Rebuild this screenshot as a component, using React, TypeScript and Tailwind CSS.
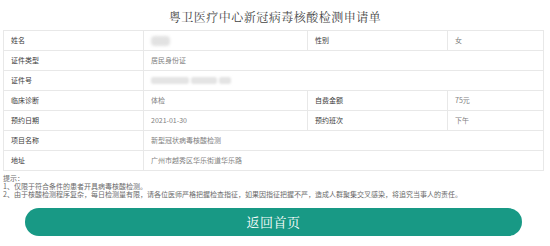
import React from 'react';

const font = { fontFamily: '"Noto Sans CJK SC", "Noto Sans", sans-serif' };

type Cell = { label: string; value: React.ReactNode };

const Label = ({ children }: { children: React.ReactNode }) => (
  <div className="h-[19px] flex items-center pl-[7px] border-r border-[#e8e8e8] text-[#3a3a3a]">{children}</div>
);

const Value = ({ children, wide }: { children: React.ReactNode; wide?: boolean }) => (
  <div className={`h-[19px] flex items-center pl-[7px] text-[#808080] ${wide ? 'col-span-3' : ''}`}>{children}</div>
);

const Blur = ({ w }: { w: string }) => (
  <div className={`${w} h-[7px] bg-[#e4e4e4] rounded-[2px] blur-[1.2px]`} />
);

const pairs: Cell[][] = [
  [
    { label: '姓名', value: <div className="w-[19px] h-[10px] bg-[#e2e2e2] blur-[1.5px] rounded-sm" /> },
    { label: '性别', value: '女' },
  ],
  [{ label: '证件类型', value: '居民身份证' }],
  [
    {
      label: '证件号',
      value: (
        <div className="flex gap-[2px] items-center">
          <Blur w="w-[38px]" />
          <Blur w="w-[26px]" />
          <Blur w="w-[12px]" />
        </div>
      ),
    },
  ],
  [
    { label: '临床诊断', value: '体检' },
    { label: '自费金额', value: '75元' },
  ],
  [
    { label: '预约日期', value: '2021-01-30' },
    { label: '预约班次', value: '下午' },
  ],
  [{ label: '项目名称', value: '新型冠状病毒核酸检测' }],
  [{ label: '地址', value: '广州市越秀区华乐街道华乐路' }],
];

export default function App() {
  return (
    <div className="w-[550px] h-[246px] bg-white overflow-hidden" style={font}>
      <h1
        className="h-[30px] flex items-center justify-center text-[12px] tracking-[0.5px] text-[#444] pt-[3px]"
        style={{ fontFamily: '"Noto Serif CJK SC", "Noto Sans CJK SC", serif' }}
      >
        粤卫医疗中心新冠病毒核酸检测申请单
      </h1>

      <div className="ml-[3px] w-[541px] border border-[#e8e8e8] text-[7px] leading-none">
        {pairs.map((row, i) => (
          <div
            key={i}
            className={`grid grid-cols-[140px_164px_140px_1fr] ${i < pairs.length - 1 ? 'border-b border-[#e8e8e8]' : ''}`}
          >
            {row.map((c, j) => (
              <React.Fragment key={j}>
                <Label>{c.label}</Label>
                <Value wide={row.length === 1}>
                  {row.length > 1 && j === 0 ? (
                    <div className="flex-1 h-full flex items-center border-r border-[#e8e8e8]">{c.value}</div>
                  ) : (
                    c.value
                  )}
                </Value>
              </React.Fragment>
            ))}
          </div>
        ))}
      </div>

      <div className="pl-[3px] pt-[3px] text-[7px] leading-[8px] text-[#6a6a6a]">
        <p>提示：</p>
        <p>1、仅限于符合条件的患者开具病毒核酸检测。</p>
        <p>2、由于核酸检测程序复杂，每日检测量有限，请各位医师严格把握检查指征，如果因指征把握不严，造成人群聚集交叉感染，将追究当事人的责任。</p>
      </div>

      <div className="pt-[10px] pl-[25px]">
        <button
          className="w-[497px] h-[28px] rounded-full bg-[#189985] text-white text-[13px] tracking-[0.5px] flex items-center justify-center"
          style={{ fontFamily: '"Noto Serif CJK SC", "Noto Sans CJK SC", serif' }}
        >
          返回首页
        </button>
      </div>
    </div>
  );
}
